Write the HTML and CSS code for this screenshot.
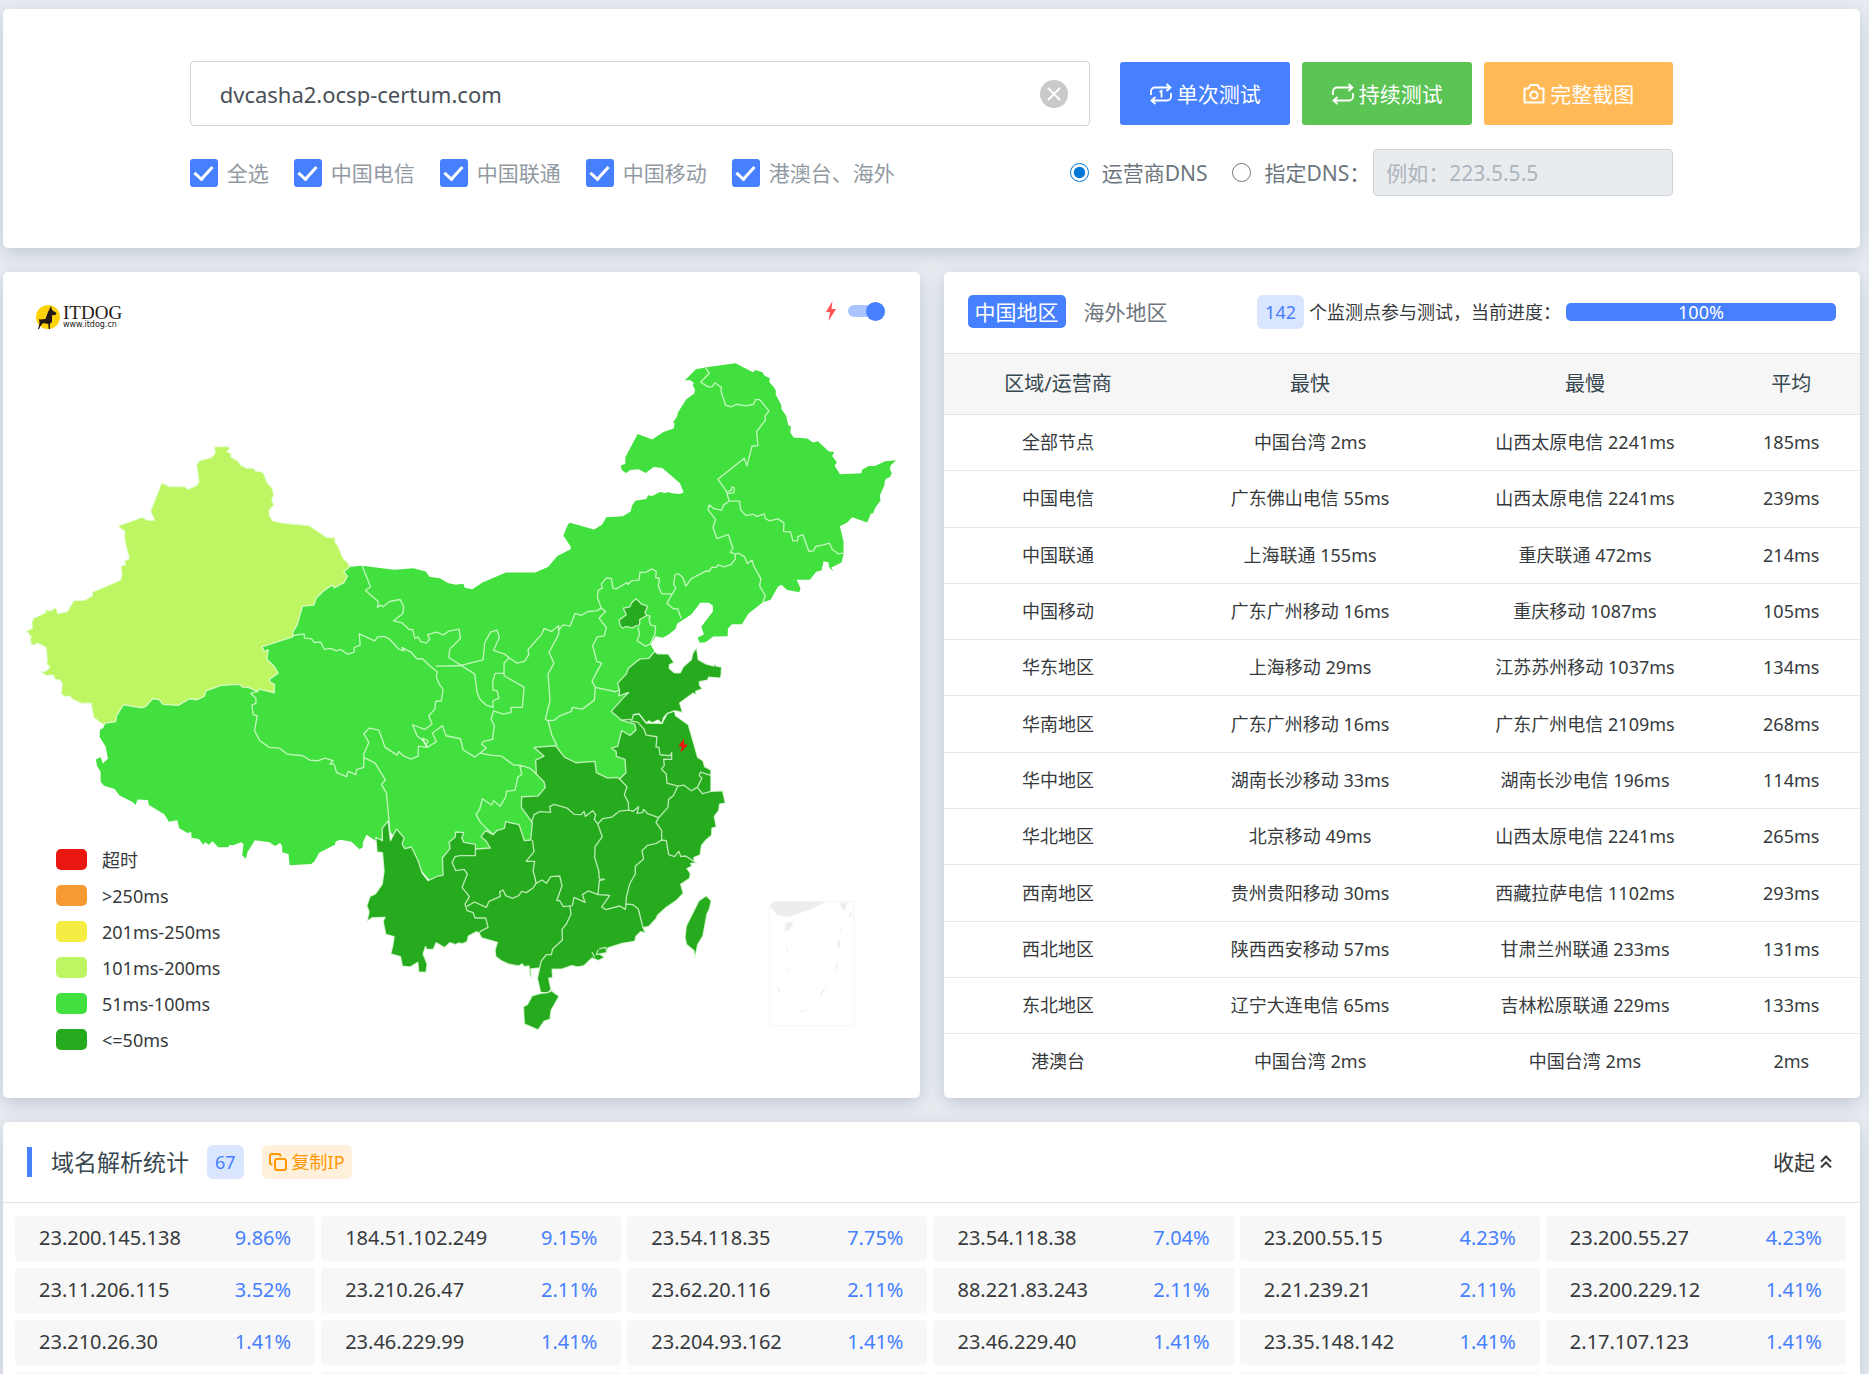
FILE: index.html
```html
<!DOCTYPE html>
<html lang="zh-CN">
<head>
<meta charset="utf-8">
<meta name="viewport" content="width=device-width, initial-scale=1">
<title>ITDOG - dvcasha2.ocsp-certum.com</title>
<link rel="stylesheet" href="styles.css">
</head>
<body>
<main class="page">
  <form class="card search">
    <div class="search-row">
      <div class="host-box">
        <input class="host-input" type="text" aria-label="域名" value="dvcasha2.ocsp-certum.com">
        <button class="clear" type="button" aria-label="清除">
          <svg viewBox="0 0 28 28" width="28" height="28"><circle cx="14" cy="14" r="14" fill="#c9c9c9"/><path d="M8 8l12 12M20 8L8 20" stroke="#fff" stroke-width="2"/></svg>
        </button>
      </div>
      <div class="buttons">
        <button class="btn btn-blue" type="button">
          <svg class="icon" viewBox="0 0 22 22" width="22" height="22"><path d="M1 12V8.500a4 4 0 0 1 4-4h15M16.500 1l4 3.500-4 3.500M21 10v3.500a4 4 0 0 1-4 4H2M5.500 14l-4 3.500 4 3.500M9.500 9l2-1.200V14.500"/></svg>单次测试
        </button>
        <button class="btn btn-green" type="button">
          <svg class="icon" viewBox="0 0 22 22" width="22" height="22"><path d="M1 12V8.500a4 4 0 0 1 4-4h15M16.500 1l4 3.500-4 3.500M21 10v3.500a4 4 0 0 1-4 4H2M5.500 14l-4 3.500 4 3.500"/></svg>持续测试
        </button>
        <button class="btn btn-orange" type="button">
          <svg class="icon" viewBox="0 0 22 22" width="22" height="22"><path d="M1.500 5.500h4L7.500 2h7l2 3.500h4v14h-19z" stroke-width="2" stroke-linejoin="round"/><circle cx="11" cy="12" r="3.600" stroke-width="2"/></svg>完整截图
        </button>
      </div>
    </div>
    <div class="option-row">
      <div class="checks">
        <label class="check"><input type="checkbox" checked>全选</label>
        <label class="check"><input type="checkbox" checked>中国电信</label>
        <label class="check"><input type="checkbox" checked>中国联通</label>
        <label class="check"><input type="checkbox" checked>中国移动</label>
        <label class="check"><input type="checkbox" checked>港澳台、海外</label>
      </div>
      <div class="dns">
        <label class="radio"><input type="radio" name="dns" checked>运营商DNS</label>
        <label class="radio"><input type="radio" name="dns">指定DNS：</label>
        <input class="dns-input" type="text" aria-label="指定DNS" placeholder="例如：223.5.5.5" disabled>
      </div>
    </div>
  </form>

  <div class="columns">
    <section class="card map-card">
      <svg class="map" viewBox="9 813 2751 2478" role="img" aria-label="中国延迟地图">
        <g class="lv2">
          <path transform="translate(0 810)" d="M1050 888L1087 885 1183 897 1240 892 1278 902 1289 918 1320 922 1346 937 1370 942 1384 941 1384 1400 400 1400 400 1290 850 1050 1000 900Z"/>
          <path transform="translate(0 1920)" d="M316 247L310 262 300 267 299 289 317 317 324 353 309 368 302 349 288 356 291 375 302 393 302 423 313 436 343 444 359 464 398 484 407 493 413 476 444 478 447 493 493 521 507 543 532 539 538 563 563 577 574 574 575 591 597 595 611 613 615 604 627 612 638 602 655 620 684 620 690 613 700 614 724 605 731 610 727 644 738 654 743 634 765 599 809 605 825 616 841 607 847 617 847 635 866 640 869 674 934 670 944 662 958 636 1005 612 1008 602 1022 597 1055 603 1079 626 1089 620 1089 606 1100 582 1130 602 1146 598 1148 560 1165 543 1200 620 1290 718 1340 700 1420 620 1420 100 800 100 400 150Z"/>
          <path transform="translate(1080 1920)" d="M-40 0H860L885 32 800 150 850 230 800 420 600 400 560 450 520 600 400 640 300 650 250 710 210 718 180 680 80 560 -40 560Z"/>
          <path transform="translate(1380 1020)" d="M-10 732L11 729 15 741 38 745 68 725 139 695 227 695 266 678 292 646 333 625 333 618 311 584 325 550 331 546 403 566 427 552 440 529 490 526 513 512 517 495 527 480 560 474 565 463 578 465 600 453 617 456 626 453 635 457 660 459 672 455 661 427 608 381 582 378 558 396 537 385 512 387 499 396 487 388 483 374 497 369 497 349 534 279 578 296 611 273 642 263 645 248 640 245 653 226 654 216 680 175 704 158 706 145 699 133 703 126 692 118 676 118 709 85 740 79 828 67 880 94 887 87 909 94 914 104 931 112 929 123 942 138 949 149 948 160 965 192 966 205 980 225 986 253 994 256 992 275 1002 290 1044 293 1060 305 1075 301 1107 331 1124 333 1118 345 1132 365 1125 374 1141 400 1206 397 1208 386 1228 375 1246 375 1277 361 1310 358 1294 373 1291 384 1297 397 1291 409 1283 411 1276 419 1275 432 1261 464 1263 479 1247 501 1241 517 1234 519 1223 545 1178 529 1162 546 1141 556 1152 603 1152 640 1146 665 1115 680 1122 692 1109 680 1107 665 1092 661 1086 689 1070 693 1051 717 1011 717 1023 743 1019 754 981 747 966 732 955 738 933 777 910 784 866 819 847 850 817 850 805 863 804 886 761 887 738 904 720 906 714 891 733 880 725 858 760 812 760 795 748 786 722 786 695 821 653 848 647 865 626 882 609 891 588 886 573 911 584 931 560 960 500 1100 470 1220 -10 1220Z"/>
        </g>
        <path class="lv3 edge" transform="translate(0 810)" d="M643 528L686 526 690 535 681 541 694 549 693 558 715 571 722 582 740 592 759 591 768 601 783 601 792 609 801 634 816 651 822 671 816 685 822 703 808 718 809 733 817 749 850 757 928 764 980 799 1005 801 1006 815 1014 824 1029 861 1046 878 1050 888 1032 903 1043 916 1032 936 1003 951 998 942 972 960 949 982 942 1003 908 1006 892 1062 879 1083 879 1098 786 1128 793 1141 805 1137 801 1165 824 1188 835 1207 809 1225 811 1234 824 1241 823 1266 778 1255 773 1263 745 1250 727 1249 720 1241 664 1244 619 1260 613 1277 592 1287 569 1284 535 1304 489 1301 477 1286 458 1284 438 1307 425 1311 371 1302 350 1335 347 1353 316 1357 310 1362 281 1340 273 1297 246 1298 220 1287 209 1276 194 1278 183 1268 187 1241 180 1228 166 1226 159 1213 138 1214 123 1203 138 1201 150 1189 140 1180 142 1169 138 1130 112 1117 103 1123 93 1120 91 1103 94 1099 79 1080 97 1073 95 1056 101 1042 138 1025 135 1016 152 1020 167 1010 174 1028 202 1022 222 989 254 988 277 975 277 964 361 928 366 914 363 886 377 881 373 871 388 863 374 808 374 781 353 766 428 739 442 748 464 748 452 721 485 636 510 647 555 647 564 655 590 644 597 632 590 582 600 568 634 560 646 546Z"/>
        <g class="edge line">
          <path transform="translate(0 810)" d="M1087 885L1112 948 1097 959 1135 992 1133 1010 1142 1003 1150 1008 1170 992 1201 986 1212 1008 1209 1028 1182 1050 1206 1056 1228 1076 1239 1076 1245 1103 1255 1098 1262 1112 1280 1117 1290 1105 1283 1092 1309 1084 1332 1092 1347 1081 1378 1075 1382 1103 1350 1135 1347 1160 1388 1186M879 1094L913 1089 914 1102 935 1104 944 1115 962 1114 974 1136 993 1133 1010 1140 1023 1136 1043 1150 1062 1145 1064 1130 1081 1123 1078 1089 1125 1110 1133 1098 1153 1097 1168 1104 1198 1136 1213 1140 1206 1130 1235 1145 1251 1164 1268 1164 1290 1185 1312 1203 1310 1220 1318 1240 1330 1255 1325 1290 1308 1292 1305 1315 1287 1335 1297 1360 1275 1376 1238 1362 1252 1395 1270 1410 1282 1430"/>
          <path transform="translate(0 1920)" d="M1282 320L1256 316 1255 346 1234 355 1210 345 1197 332 1192 343 1156 320 1137 268 1108 262 1092 279 1107 305 1092 340 1092 380 1070 387 1068 402 1045 392 1040 408 1022 400 1010 395 1003 370 990 370 1000 360 975 352 955 360 930 358 908 345 862 340 838 322 808 320 780 300 764 270 772 225 760 222 756 192 768 188 768 172 752 158 773 152M1092 350L1126 367 1157 418 1145 431 1160 457 1168 543 1172 600"/>
          <path transform="translate(1080 1920)" d="M202 320L230 303 218 277 248 255 259 285 302 294 310 327 345 349 361 337 398 344 425 346 462 373 480 373 510 382 530 400M402 295L372 302 365 310 380 322 361 337M308 76L345 100 352 155 360 175 378 192 400 200 400 180 418 172 412 150 400 148 399 125 406 98 433 98M480 373L486 402 475 408 466 448 440 452 438 468 421 497 402 480 395 493 368 474 360 505 349 522 362 545 400 582M565 240L577 285 592 314M202 320L188 292 205 300 200 312"/>
          <path transform="translate(1380 1020)" d="M-72 976L-2 975 70 957 75 905 93 873 112 868 119 890 101 929 135 940 148 951 133 967 133 1005 193 1039 188 1100 154 1100 154 1115 130 1120 102 1110 94 1135 104 1155 98 1195M148 951L172 967 194 962 207 942 205 927 246 880 253 863 275 872 297 855 297 880 268 935 283 967 265 1000 271 1080 257 1135 265 1140M297 868L310 852 331 856 346 818 365 824 384 812 410 810 425 802 438 812 418 832 440 860 434 885 413 888 399 915 403 930 411 962 426 967 408 1000 397 1022 407 1040 404 1078 368 1105 338 1100 335 1112 300 1125 285 1138 265 1140M407 1040L468 1053 478 1048M425 802L413 770 416 748 428 742 425 730 440 711 455 713 460 742 470 744 502 725 505 731 515 720 538 718 541 695 560 694 577 684 590 692 588 710 600 713 596 735 606 759 638 759 622 787 640 803 654 804 665 834M638 759L649 740 642 732 646 702 655 698 669 709 679 736 694 714 740 690 748 692 757 679 770 680 775 672 794 678 814 671 827 655 827 640 812 634 820 622 806 581 772 593 760 560 768 536 745 506 749 492 762 503 786 508 792 492 809 481M827 640L836 637 855 648 863 668 878 658 882 675 904 714 900 735 917 764 910 784M809 481L840 481 843 507 859 524 882 520 890 527 914 519 917 533 930 540 955 534 973 546 972 572 993 573 1000 600 1014 600 1015 587 1030 581 1048 632 1062 630 1068 617 1092 612 1110 607 1118 625 1136 639 1152 637M809 481L802 458 823 456 824 441 817 438 815 448 802 454 775 415 854 352 862 375 877 316 895 314 891 272 917 238 917 225 928 210 900 176 888 176 882 190 860 195 830 190 815 198 798 193 784 150 786 140 766 126 757 138 746 138 723 124 749 97 738 80M540 836L552 822 572 826 568 835 573 853 588 856 586 880 571 911 557 916 532 900 540 880 535 860"/>
        </g>
        <path class="lv1 edge" transform="translate(1380 1020)" d="M529 774L546 790 564 797 556 815 561 824 540 836 540 852 527 856 518 861 499 857 489 862 482 855 478 838 500 822 491 802 511 798 516 786Z"/>
        <g transform="translate(1080 1920)">
          <path class="lv1 edge" d="M944 210L948 225 986 252 1000 300 1014 350 1030 360 1035 378 1054 388 1054 452 1089 450 1097 487 1080 490 1077 510 1064 527 1070 559 1057 562 1056 584 1039 598 1026 614 1021 643 1003 650 1004 662 1012 667 993 668 997 676 982 684 992 698 990 713 963 731 971 758 951 779 920 800 895 822 889 834 868 857 850 861 858 877 843 873 829 887 825 902 787 908 745 922 740 938 720 941 735 950 716 960 697 952 673 975 655 979 636 975 608 985 577 986 579 1011 567 1013 574 1047 565 1056 543 1056 533 1013 540 982 513 985 515 1011 510 1005 508 976 493 978 488 970 476 976 445 970 424 960 408 948 406 928 413 905 366 892 358 878 350 873 326 886 322 903 309 909 296 907 288 912 270 906 254 921 229 906 221 926 201 926 197 918 190 940 202 970 199 995 177 994 174 965 151 979 128 977 122 948 93 940 99 915 103 888 78 881 70 842 76 830 38 831 22 842 28 813 21 795 31 767 47 760 67 731 73 692 68 636 52 634 48 590 68 600 67 563 85 541 92 600 110 565 133 591 127 610 135 624 155 619 175 660 187 697 205 720 235 706 250 704 248 652 271 623 268 605 286 590 288 574 312 576 306 592 312 605 347 611 347 625 392 622 378 600 364 588 378 570 400 582 411 570 434 563 438 543 478 552 494 600 513 598 518 546 485 500 486 468 535 466 557 440 553 424 530 400 528 358 553 346 523 320 588 315 614 349 648 366 706 362 710 396 744 412 772 410 780 415 799 396 796 356 770 347 770 333 755 322 774 317 786 270 811 284 829 268 825 250 785 238 821 222 838 219 860 247 907 248 923 218Z"/>
          <path class="lv1 edge" d="M885 32L893 39 926 40 943 65 929 72 929 83 944 96 962 96 971 78 995 57 1000 36 1011 21 1016 57 1040 70 1062 76 1066 70 1070 76 1086 79 1084 107 1080 112 1047 109 1044 118 1019 123 1020 134 1028 144 1008 152 1010 163 1001 157 960 187 969 215 944 210 923 218 912 230 907 248 895 238 877 246 868 240 860 247 838 219 821 222 818 235 785 238 755 212 790 172 807 155 777 165 780 150 774 127 800 100 806 83 819 72 840 55 867 53Z"/>
          <path class="lv1 edge" d="M575 1050L598 1067 574 1110 571 1136 553 1142 535 1168 494 1150 491 1098 503 1092 517 1066 543 1058 565 1056Z"/>
          <path class="lv1 edge" d="M1040 765L1055 780 1050 803 1042 820 1030 886 1014 912 1006 952 1003 930 981 912 976 890 980 856 1018 780Z"/>
          <path class="edge line" d="M811 240L835 245 853 265 859 283 892 288 889 318 898 320 901 342 932 345 936 335 936 356 912 355 914 374 905 385 920 400 922 427 955 436 972 433 995 450 1013 440 1029 459 1054 452M1013 440L1027 412 1019 405 1022 394 1056 405M955 436L941 465 927 476 925 500 897 531 889 545 906 570 906 598M897 531L864 519 852 506 848 516 832 518 837 498 820 512 807 508M780 415L802 438 794 462 806 485 807 508 780 511 757 529 729 534 714 550 704 535 708 522 699 510 677 527 673 512 665 522 643 521 622 502 583 491 570 498 573 515 540 513 523 522 515 545M714 550L728 588 706 618 705 650 717 690 719 715 734 716 719 720 715 762M906 598L890 608 864 614 847 630 852 655 827 677 827 700 810 730 800 770 799 790M906 598L920 600 927 642 945 648 957 632 964 648 978 646 1003 662M799 790L820 792 836 805 850 861M799 790L797 806 780 796 738 807 726 799 750 765 740 763 715 762 686 751 668 762 676 785 643 770 638 795 611 798 600 780 591 780 607 735 600 706 573 708 560 728 547 718 529 728M630 795L634 820 620 850 607 866 608 898 579 925 575 942 560 942 544 962 540 982M518 598L523 633 499 662 525 662 520 690 526 712 529 728 520 742 500 756 486 752 477 765 458 773 438 765 430 748 420 753 422 767 388 782 380 800 344 784 322 797M347 625L347 645 301 645 286 648 277 665 288 690 313 686 323 700 307 740 329 768 316 790 322 810 340 816 346 832 378 832 385 860 362 872 358 878M718 925L738 920 742 935 710 942 715 928M697 935L705 950"/>
          <path fill="#f01414" d="M973 293L956 317 967 317 962 337 985 311 973 311Z"/>
        </g>
        <g transform="translate(2220 2640)">
          <path class="inset" d="M106 62H344V435H90V74Z"/>
          <path fill="#ededed" d="M106 62L258 64 210 87 150 108 114 104 90 76ZM298 66H323L314 92ZM140 127L162 122 150 148 134 152ZM294 178H301V202H294ZM340 88L336 105 324 110ZM298 244L292 264 282 266ZM112 321H119L123 344ZM137 190L147 217 143 215ZM160 252L152 264 137 276ZM264 313L245 345 238 345ZM210 381L188 395 177 395ZM313 130L302 152 299 151Z"/>
        </g>
      </svg>

      <a class="logo" href="#" aria-label="ITDOG">
        <svg viewBox="0 0 24 24" width="24" height="24"><circle cx="12" cy="12" r="12" fill="#fbd206"/><path d="M15 1l1 4 4.500 3-1 2-3.500.3V17l-2 1.500V24h-1.300L12.300 19 7 18l-2.500 3L3 24H2l1.500-5.500L3 14l1 .5 5.500-.5L12 7z" fill="#231815"/></svg>
        <span class="logo-text"><b class="logo-name">ITDOG</b><span class="logo-url">www.itdog.cn</span></span>
      </a>

      <label class="bolt-toggle" aria-label="闪电标记">
        <svg viewBox="0 0 10 20" width="10" height="20"><path d="M6.500 0L0 11h4L2.500 20 10 8H5.500z" fill="#ff5252"/></svg>
        <input class="switch" type="checkbox" role="switch" checked>
      </label>

      <ul class="legend">
        <li><span class="swatch s6"></span>超时</li>
        <li><span class="swatch s5"></span>&gt;250ms</li>
        <li><span class="swatch s4"></span>201ms-250ms</li>
        <li><span class="swatch s3"></span>101ms-200ms</li>
        <li><span class="swatch s2"></span>51ms-100ms</li>
        <li><span class="swatch s1"></span>&lt;=50ms</li>
      </ul>
    </section>

    <section class="card result">
      <header class="result-head">
        <nav class="tabs">
          <button class="tab tab-on" type="button">中国地区</button>
          <button class="tab" type="button">海外地区</button>
        </nav>
        <div class="status">
          <span class="badge">142</span>
          <span class="status-text">个监测点参与测试，当前进度：</span>
          <div class="progress" role="progressbar" aria-valuenow="100" aria-valuemin="0" aria-valuemax="100"><div class="progress-bar" style="width:100%">100%</div></div>
        </div>
      </header>
      <table class="table">
        <colgroup><col class="c-area"><col class="c-time"><col class="c-time"><col class="c-avg"></colgroup>
        <thead><tr><th>区域/运营商</th><th>最快</th><th>最慢</th><th>平均</th></tr></thead>
        <tbody>
          <tr><td>全部节点</td><td>中国台湾 2ms</td><td>山西太原电信 2241ms</td><td>185ms</td></tr>
          <tr><td>中国电信</td><td>广东佛山电信 55ms</td><td>山西太原电信 2241ms</td><td>239ms</td></tr>
          <tr><td>中国联通</td><td>上海联通 155ms</td><td>重庆联通 472ms</td><td>214ms</td></tr>
          <tr><td>中国移动</td><td>广东广州移动 16ms</td><td>重庆移动 1087ms</td><td>105ms</td></tr>
          <tr><td>华东地区</td><td>上海移动 29ms</td><td>江苏苏州移动 1037ms</td><td>134ms</td></tr>
          <tr><td>华南地区</td><td>广东广州移动 16ms</td><td>广东广州电信 2109ms</td><td>268ms</td></tr>
          <tr><td>华中地区</td><td>湖南长沙移动 33ms</td><td>湖南长沙电信 196ms</td><td>114ms</td></tr>
          <tr><td>华北地区</td><td>北京移动 49ms</td><td>山西太原电信 2241ms</td><td>265ms</td></tr>
          <tr><td>西南地区</td><td>贵州贵阳移动 30ms</td><td>西藏拉萨电信 1102ms</td><td>293ms</td></tr>
          <tr><td>西北地区</td><td>陕西西安移动 57ms</td><td>甘肃兰州联通 233ms</td><td>131ms</td></tr>
          <tr><td>东北地区</td><td>辽宁大连电信 65ms</td><td>吉林松原联通 229ms</td><td>133ms</td></tr>
          <tr><td>港澳台</td><td>中国台湾 2ms</td><td>中国台湾 2ms</td><td>2ms</td></tr>
        </tbody>
      </table>
    </section>
  </div>

  <section class="card stats">
    <header class="stats-head">
      <h2 class="stats-title">域名解析统计</h2>
      <span class="badge">67</span>
      <button class="copy" type="button">
        <svg viewBox="0 0 18 18" width="18" height="18"><rect x="6" y="6" width="11" height="11" rx="2"/><path d="M3.500 11.500H3a2 2 0 0 1-2-2V3a2 2 0 0 1 2-2h6.500a2 2 0 0 1 2 2v.5"/></svg>复制IP
      </button>
      <button class="fold" type="button">收起
        <svg viewBox="0 0 12 14" width="12" height="14"><path d="M1 6.500L6 1.500l5 5M1 12.500l5-5 5 5"/></svg>
      </button>
    </header>
    <ul class="ips">
      <li><span>23.200.145.138</span><span class="pct">9.86%</span></li>
      <li><span>184.51.102.249</span><span class="pct">9.15%</span></li>
      <li><span>23.54.118.35</span><span class="pct">7.75%</span></li>
      <li><span>23.54.118.38</span><span class="pct">7.04%</span></li>
      <li><span>23.200.55.15</span><span class="pct">4.23%</span></li>
      <li><span>23.200.55.27</span><span class="pct">4.23%</span></li>
      <li><span>23.11.206.115</span><span class="pct">3.52%</span></li>
      <li><span>23.210.26.47</span><span class="pct">2.11%</span></li>
      <li><span>23.62.20.116</span><span class="pct">2.11%</span></li>
      <li><span>88.221.83.243</span><span class="pct">2.11%</span></li>
      <li><span>2.21.239.21</span><span class="pct">2.11%</span></li>
      <li><span>23.200.229.12</span><span class="pct">1.41%</span></li>
      <li><span>23.210.26.30</span><span class="pct">1.41%</span></li>
      <li><span>23.46.229.99</span><span class="pct">1.41%</span></li>
      <li><span>23.204.93.162</span><span class="pct">1.41%</span></li>
      <li><span>23.46.229.40</span><span class="pct">1.41%</span></li>
      <li><span>23.35.148.142</span><span class="pct">1.41%</span></li>
      <li><span>2.17.107.123</span><span class="pct">1.41%</span></li>
      <li></li><li></li><li></li><li></li><li></li><li></li>
    </ul>
  </section>
</main>
</body>
</html>
```
FILE: styles.css
```css
* { box-sizing: border-box; }

body {
  margin: 0;
  height: 100vh;
  overflow: hidden;
  background: #e9edf2;
  color: #373a3c;
  font: 18px/24px "Noto Sans", "Noto Sans CJK SC", sans-serif;
}

button, input { font: inherit; color: inherit; }
button { border: 0; padding: 0; background: none; cursor: pointer; }
ul { list-style: none; margin: 0; padding: 0; }

.page {
  display: flex;
  flex-direction: column;
  gap: 24px;
  padding: 9px 9px 0 3px;
}

.card {
  background: #fff;
  border-radius: 5px;
  box-shadow: 0 5px 18px rgba(62, 87, 111, .25);
}

/* search form */
.search { padding: 52px calc(10% + 1px); }
.search-row { display: flex; align-items: center; gap: 30px; }
.host-box {
  flex: 1;
  display: flex;
  align-items: center;
  height: 65px;
  padding: 0 21px 0 29px;
  border: 1px solid #ced4da;
  border-radius: 4px;
}
.host-input {
  flex: 1;
  min-width: 0;
  border: 0;
  padding: 0;
  outline: 0;
  font-size: 22px;
  color: #495057;
}
.clear svg { display: block; }
.buttons { display: flex; gap: 12px; }
.btn {
  display: flex;
  align-items: center;
  justify-content: center;
  gap: 5px;
  width: 170px;
  height: 63px;
  border-radius: 3px;
  font-size: 21px;
  color: #fff;
}
.btn-blue { background: #4680ff; }
.btn-green { background: #5bc455; }
.btn-orange { width: 189px; background: #ffb957; }
.icon { fill: none; stroke: currentColor; stroke-width: 1.8; }

.option-row {
  display: flex;
  align-items: center;
  justify-content: space-between;
  margin-top: 23px;
  font-size: 21px;
}
.checks { display: flex; gap: 25px; color: #919aa3; }
.check { display: flex; align-items: center; gap: 9px; }
.check input {
  appearance: none;
  width: 28px;
  height: 28px;
  margin: 0;
  border-radius: 3px;
  background: #4680ff;
  display: grid;
  place-items: center;
}
.check input:checked::after {
  content: "";
  width: 8px;
  height: 15px;
  margin-bottom: 4px;
  border: solid #fff;
  border-width: 0 3px 3px 0;
  transform: rotate(42deg);
}
.dns { display: flex; align-items: center; color: #6c757d; }
.radio { display: flex; align-items: center; gap: 13px; margin-right: 25px; }
.radio + .radio { margin-right: 3px; }
.radio input { width: 19px; height: 19px; margin: 0; accent-color: #0078d7; }
.dns-input {
  width: 300px;
  height: 47px;
  padding: 0 12px;
  border: 1px solid #ced4da;
  border-radius: 4px;
  background: #e9ecef;
}
.dns-input::placeholder { color: #adb5bd; opacity: 1; }

/* map and result columns */
.columns {
  display: grid;
  grid-template-columns: minmax(0, 1fr) minmax(0, 1fr);
  gap: 24px;
}
.map-card { position: relative; }
.map { display: block; width: 100%; }
.lv1 { fill: #25ab1d; }
.lv2 { fill: #42e03e; }
.lv3 { fill: #bef663; }
.edge { stroke: rgba(235, 255, 230, .75); stroke-width: 4; stroke-linejoin: round; }
.line { fill: none; }
.inset { fill: none; stroke: #f6f6f6; stroke-width: 4; }

.logo {
  position: absolute;
  left: 33px;
  top: 33px;
  display: flex;
  gap: 3px;
  color: #231815;
  text-decoration: none;
}
.logo-text { display: flex; flex-direction: column; }
.logo-name { font: 19px/16px "Liberation Serif", serif; }
.logo-url { font: 8px/8px "DejaVu Sans", sans-serif; }

.bolt-toggle {
  position: absolute;
  right: 35px;
  top: 29px;
  display: flex;
  align-items: center;
  gap: 12px;
}
.switch {
  appearance: none;
  display: flex;
  align-items: center;
  justify-content: flex-end;
  width: 37px;
  height: 12px;
  margin: 0;
  border-radius: 6px;
  background: #a9c4ff;
}
.switch::after {
  content: "";
  width: 19px;
  height: 19px;
  flex: none;
  border-radius: 50%;
  background: #4680ff;
}

.legend {
  position: absolute;
  left: 53px;
  bottom: 46px;
  display: grid;
  gap: 12px;
}
.legend li { display: flex; align-items: center; gap: 15px; }
.swatch { width: 31px; height: 21px; border-radius: 5px; }
.s6 { background: #e81710; }
.s5 { background: #f79a34; }
.s4 { background: #f6ed44; }
.s3 { background: #bef663; }
.s2 { background: #42e03e; }
.s1 { background: #25ab1d; }

/* results */
.result-head {
  display: flex;
  align-items: center;
  justify-content: space-between;
  height: 81px;
  padding: 0 24px 2px;
}
.tabs { display: flex; gap: 11px; }
.tab {
  height: 33px;
  padding: 0 7px;
  border-radius: 5px;
  font-size: 21px;
  line-height: 32px;
  color: #6c757d;
}
.tab-on { background: #4680ff; color: #fff; }
.status { display: flex; align-items: center; gap: 5px; }
.badge {
  height: 34px;
  padding: 0 8px;
  border-radius: 6px;
  background: #dae6ff;
  color: #4680ff;
  line-height: 34px;
}
.progress {
  width: 270px;
  border-radius: 5px;
  background: #e9ecef;
}
.progress-bar {
  border-radius: 5px;
  background: #4680ff;
  color: #fff;
  line-height: 18px;
  text-align: center;
}

.table {
  width: 100%;
  height: 736px;
  table-layout: fixed;
  border-collapse: collapse;
  text-align: center;
}
.c-area { width: 25%; }
.c-time { width: 30%; }
.c-avg { width: 15%; }
.table th {
  height: 61px;
  padding: 0;
  border-top: 1px solid #e2e7ed;
  background: #f6f6f6;
  color: #37474f;
  font-size: 20px;
  font-weight: 400;
}
.table td { padding: 0 0 1px; border-top: 1px solid #e2e7ed; }

/* resolution statistics */
.stats-head {
  display: flex;
  align-items: center;
  height: 81px;
  padding: 0 28px 0 24px;
  border-bottom: 1px solid #e2e5e8;
}
.stats-title {
  margin: 0 18px 0 0;
  padding-left: 19px;
  border-left: 5px solid #4680ff;
  color: #37474f;
  font-size: 23px;
  font-weight: 400;
  line-height: 30px;
}
.copy {
  display: flex;
  align-items: center;
  gap: 5px;
  height: 34px;
  margin-left: 18px;
  padding: 0 7px;
  border-radius: 6px;
  background: #fff0dc;
  color: #ff9800;
}
.copy svg, .fold svg { fill: none; stroke: currentColor; stroke-width: 2; }
.fold {
  display: flex;
  align-items: center;
  gap: 5px;
  margin-left: auto;
  font-size: 21px;
}
.ips {
  display: grid;
  grid-template-columns: repeat(6, minmax(0, 1fr));
  grid-auto-rows: 45px;
  gap: 7px 6px;
  padding: 13px 14px 12px 12px;
  font-size: 20px;
}
.ips li {
  display: flex;
  align-items: center;
  justify-content: space-between;
  padding: 0 24px;
  border-radius: 4px;
  background: #f7f7f7;
}
.pct { color: #4680ff; }
```
